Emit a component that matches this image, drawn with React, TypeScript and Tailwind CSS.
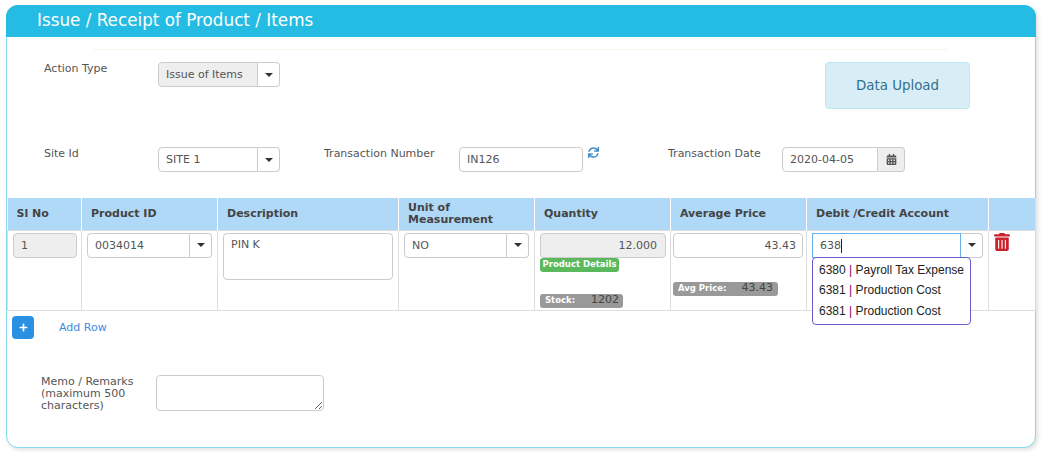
import { FaCalendarAlt, FaPlus, FaSync, FaTrashAlt } from 'react-icons/fa'

const caret = <span className="block h-0 w-0 border-x-[4px] border-t-[4px] border-x-transparent border-t-[#333]" />

function SelectBox({ value, disabled, width, textWidth }: { value: string; disabled?: boolean; width: string; textWidth: string }) {
	return (
		<div className={`flex h-[25px] ${width}`}>
			<div className={`flex ${textWidth} items-center rounded-l-[4px] border border-[#ccc] pl-[7px] pt-[2px] ${disabled ? 'bg-[#eee]' : 'bg-white'}`}>
				{value}
			</div>
			<div className="flex flex-1 items-center justify-center rounded-r-[4px] border border-l-0 border-[#ccc] bg-white">{caret}</div>
		</div>
	)
}

const headers = ['Sl No', 'Product ID', 'Description', 'Unit of Measurement', 'Quantity', 'Average Price', 'Debit /Credit Account', '']
const colWidths = ['w-[74px]', 'w-[136px]', 'w-[181px]', 'w-[136px]', 'w-[136px]', 'w-[136px]', 'w-[182px]', 'w-[47px]']

export default function App() {
	return (
		<div className="h-[452px] w-[1042px] overflow-hidden bg-white pl-[6px] pt-[5px] font-['DejaVu_Sans',sans-serif] text-[11px] text-[#555]">
			<div className="relative h-[443px] w-[1030px] rounded-[12px] border border-[#86d9ee] bg-white shadow-[2px_2px_4px_rgba(0,0,0,0.12)]">
				{/* Header */}
				<div className="-mx-px -mt-px flex h-[32px] items-center rounded-t-[12px] bg-[#24bce2] pl-[31px] text-[16.8px] text-white">
					Issue / Receipt of Product / Items
				</div>

				<div className="ml-[86px] mt-[12px] h-px w-[855px] bg-[#f6f6ea]" />

				{/* Action type */}
				<div className="mt-[12px] flex h-[47px] items-start pl-[37px]">
					<label className="w-[114px] pt-px leading-3">Action Type</label>
					<SelectBox value="Issue of Items" disabled width="w-[122px]" textWidth="w-[100px]" />
					<button className="ml-auto mr-[65px] h-[47px] w-[145px] rounded-[4px] border border-[#bce8f1] bg-[#d9edf7] pt-[2px] text-[13.4px] text-[#31708f]">
						Data Upload
					</button>
				</div>

				{/* Site and transaction */}
				<div className="mt-[38px] flex h-[25px] items-start pl-[37px]">
					<label className="w-[114px] pt-px leading-3">Site Id</label>
					<SelectBox value="SITE 1" width="w-[122px]" textWidth="w-[100px]" />
					<label className="ml-[44px] w-[135px] pt-px leading-3">Transaction Number</label>
					<div className="flex h-[25px] w-[124px] items-center rounded-[4px] border border-[#ccc] pl-[7px] pt-[2px]">IN126</div>
					<FaSync className="ml-[5px] text-[11px] text-[#428bca]" />
					<label className="ml-[69px] w-[114px] pt-px leading-3">Transaction Date</label>
					<div className="flex h-[25px]">
						<div className="flex w-[96px] items-center rounded-l-[4px] border border-[#ccc] pl-[7px] pt-[2px]">2020-04-05</div>
						<div className="flex w-[27px] items-center justify-center rounded-r-[4px] border border-l-0 border-[#ccc] bg-[#eee]">
							<FaCalendarAlt className="text-[11px] text-[#555]" />
						</div>
					</div>
				</div>

				{/* Items table */}
				<table className="mt-[26px] w-[1028px] table-fixed border-collapse">
					<thead>
						<tr className="h-[32px] bg-[#b0d9f8] text-left font-bold leading-3 text-[#444]">
							{headers.map((h, i) => (
								<th key={i} className={`${colWidths[i]} border-x border-x-white px-[9px] first:border-l-0 last:border-r-[#ddd]`}>
									{h}
								</th>
							))}
						</tr>
					</thead>
					<tbody>
						<tr className="h-[80px] align-top">
							<td className="border border-[#ddd] px-[5px] pt-[2px]">
								<div className="flex h-[25px] w-[64px] items-center rounded-[4px] border border-[#ccc] bg-[#eee] pl-[7px] pt-[2px]">1</div>
							</td>
							<td className="border border-[#ddd] px-[5px] pt-[2px]">
								<SelectBox value="0034014" width="w-[125px]" textWidth="w-[103px]" />
							</td>
							<td className="border border-[#ddd] px-[5px] pt-[2px]">
								<div className="h-[47px] rounded-[4px] border border-[#ccc] px-[7px] pt-[3px]">PIN K</div>
							</td>
							<td className="border border-[#ddd] px-[5px] pt-[2px]">
								<SelectBox value="NO" width="w-[125px]" textWidth="w-[103px]" />
							</td>
							<td className="border border-[#ddd] px-[5px] pt-[2px]">
								<div className="flex h-[25px] w-[126px] items-center justify-end rounded-[4px] border border-[#ccc] bg-[#eee] pr-[8px] pt-[2px] text-[11px]">12.000</div>
								<div className="flex h-[14px] w-[79px] items-center justify-center rounded-[3px] bg-[#5cb85c] text-[8.5px] font-bold text-white">Product Details</div>
								<div className="mt-[22px] flex h-[14px] w-[83px] items-center justify-between rounded-[3px] bg-[#999] pl-[5px] pr-[4px] text-[11px] text-[#444]">
									<span className="text-[8.5px] font-bold text-white">Stock:</span>1202
								</div>
							</td>
							<td className="border border-[#ddd] pl-[2px] pt-[2px]">
								<div className="flex h-[25px] w-[130px] items-center justify-end rounded-[4px] border border-[#ccc] pr-[6px] pt-[2px] text-[11px]">43.43</div>
								<div className="mt-[24px] flex h-[14px] w-[105px] items-center justify-between rounded-[3px] bg-[#999] pl-[5px] pr-[5px] text-[11px] text-[#444]">
									<span className="text-[8.5px] font-bold text-white">Avg Price:</span>43.43
								</div>
							</td>
							<td className="border border-[#ddd] px-[5px] pt-[2px]">
								<div className="flex h-[25px] w-[171px]">
									<div className="flex w-[149px] items-center border border-[#66afe9] pl-[7px] pt-[2px]">
										638<span className="h-[14px] w-px bg-[#222]" />
									</div>
									<div className="flex flex-1 items-center justify-center rounded-r-[4px] border border-l-0 border-[#ccc]">{caret}</div>
								</div>
							</td>
							<td className="border border-[#ddd] pl-[4px] pt-[2px]">
								<FaTrashAlt className="text-[18px] text-[#c9202c]" />
							</td>
						</tr>
					</tbody>
				</table>

				{/* Autocomplete list */}
				<div className="absolute left-[805px] top-[251px] flex h-[68px] w-[159px] flex-col justify-center rounded-[4px] border border-[#6a5acd] bg-white pl-[6px] font-['Liberation_Sans',sans-serif] text-[12px] leading-[15px] text-[#222]">
					<div>6380 <span className="text-[#800060]">|</span> Payroll Tax Expense</div>
					<div className="mt-[5px]">6381 <span className="text-[#800060]">|</span> Production Cost</div>
					<div className="mt-[6px]">6381 <span className="text-[#800060]">|</span> Production Cost</div>
				</div>

				{/* Add row */}
				<div className="ml-[5px] mt-[5px] flex h-[23px] items-center">
					<button className="flex h-[23px] w-[22px] items-center justify-center rounded-[4px] bg-[#2a90e2] text-white">
						<FaPlus className="text-[9px]" />
					</button>
					<span className="ml-[25px] pt-[2px] text-[#428bdf]">Add Row</span>
				</div>

				{/* Memo */}
				<div className="mt-[36px] flex items-start pl-[34px]">
					<label className="w-[115px] pt-px leading-3">Memo / Remarks (maximum 500 characters)</label>
					<textarea className="h-[36px] w-[168px] rounded-[4px] border border-[#ccc]" />
				</div>
			</div>
		</div>
	)
}
